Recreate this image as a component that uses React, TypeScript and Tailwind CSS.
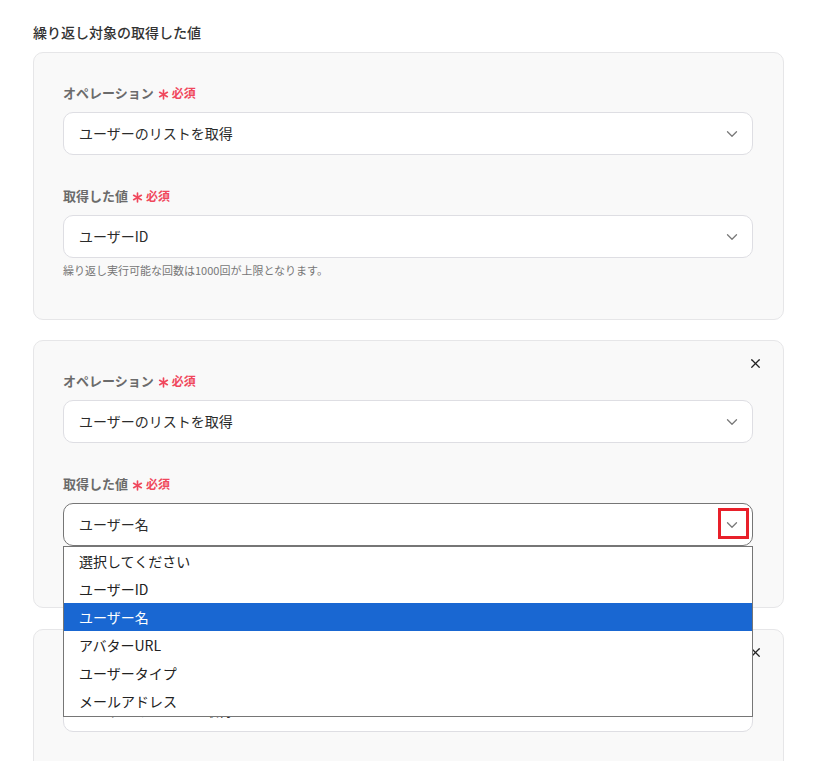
import { ChevronDown, X } from 'lucide-react';

const options = ['選択してください', 'ユーザーID', 'ユーザー名', 'アバターURL', 'ユーザータイプ', 'メールアドレス'];

function Asterisk() {
  return (
    <svg viewBox="0 0 12 12" className="w-[11px] h-[11px] text-[#f0475c]" fill="none" stroke="currentColor" strokeWidth={1.8} strokeLinecap="round">
      <line x1="6" y1="1.2" x2="6" y2="10.8" />
      <line x1="1.8" y1="3.6" x2="10.2" y2="8.4" />
      <line x1="1.8" y1="8.4" x2="10.2" y2="3.6" />
    </svg>
  );
}

function Label({ text }: { text: string }) {
  return (
    <div className="flex items-center h-[18px] mb-[10px]">
      <span className="text-[13px] font-bold text-[#6b6b6b] leading-[18px]">{text}</span>
      <span className="ml-[4px] mt-[3px]">
        <Asterisk />
      </span>
      <span className="ml-[3px] text-[12px] font-bold text-[#f0475c] leading-[18px]">必須</span>
    </div>
  );
}

function Select({ value, focused = false }: { value: string; focused?: boolean }) {
  return (
    <div
      className={`flex items-center justify-between h-[43px] rounded-[10px] bg-white pl-[15px] pr-[11px] border ${
        focused ? 'border-[#767676]' : 'border-[#dedee3]'
      }`}
    >
      <span className="text-[14px] text-[#2b2b2b]">{value}</span>
      <ChevronDown className="w-[18px] h-[18px] text-[#7a7a7a]" strokeWidth={1.75} />
    </div>
  );
}

function Card({
  second,
  closable,
  open,
  className = '',
}: {
  second: string;
  closable?: boolean;
  open?: boolean;
  className?: string;
}) {
  return (
    <div className={`relative rounded-[10px] border border-[#e6e6e8] bg-[#f9f9f9] pl-[29px] pr-[30px] pt-[31px] pb-[41px] ${className}`}>
      {closable && (
        <button className="absolute top-[15px] right-[20px] text-[#222]">
          <X className="w-[15px] h-[15px]" strokeWidth={2} />
        </button>
      )}
      <Label text="オペレーション" />
      <Select value="ユーザーのリストを取得" />
      <div className="h-[32px]" />
      <Label text="取得した値" />
      <div className="relative">
        <Select value={second} focused={open} />
        {open && (
          <>
            <div className="absolute right-[4px] top-[5px] w-[31px] h-[31px] border-[3px] border-[#e8202a]" />
            <div className="absolute left-0 right-0 top-full z-10 bg-white border border-[#767676] pb-[1px]">
              {options.map((o) => (
                <div
                  key={o}
                  className={`h-[28px] flex items-center pl-[15px] text-[14px] ${
                    o === second ? 'bg-[#1967d2] text-white' : 'text-[#222]'
                  }`}
                >
                  {o}
                </div>
              ))}
            </div>
          </>
        )}
      </div>
      <p className="mt-[4px] text-[11px] leading-[16px] text-[#777]">繰り返し実行可能な回数は1000回が上限となります。</p>
    </div>
  );
}

export default function App() {
  return (
    <div
      className="bg-white pl-[33px] pr-[34px] pt-[23px] overflow-hidden h-[761px]"
      style={{ fontFamily: '"Noto Sans CJK JP", "Noto Sans", sans-serif' }}
    >
      <h2 className="text-[14px] leading-[18px] font-medium text-[#333] mb-[11px]">繰り返し対象の取得した値</h2>
      <div className="flex flex-col gap-[20px]">
        <Card second="ユーザーID" />
        <Card second="ユーザー名" closable open />
        <Card second="ユーザーID" closable className="mt-[1px]" />
      </div>
    </div>
  );
}
